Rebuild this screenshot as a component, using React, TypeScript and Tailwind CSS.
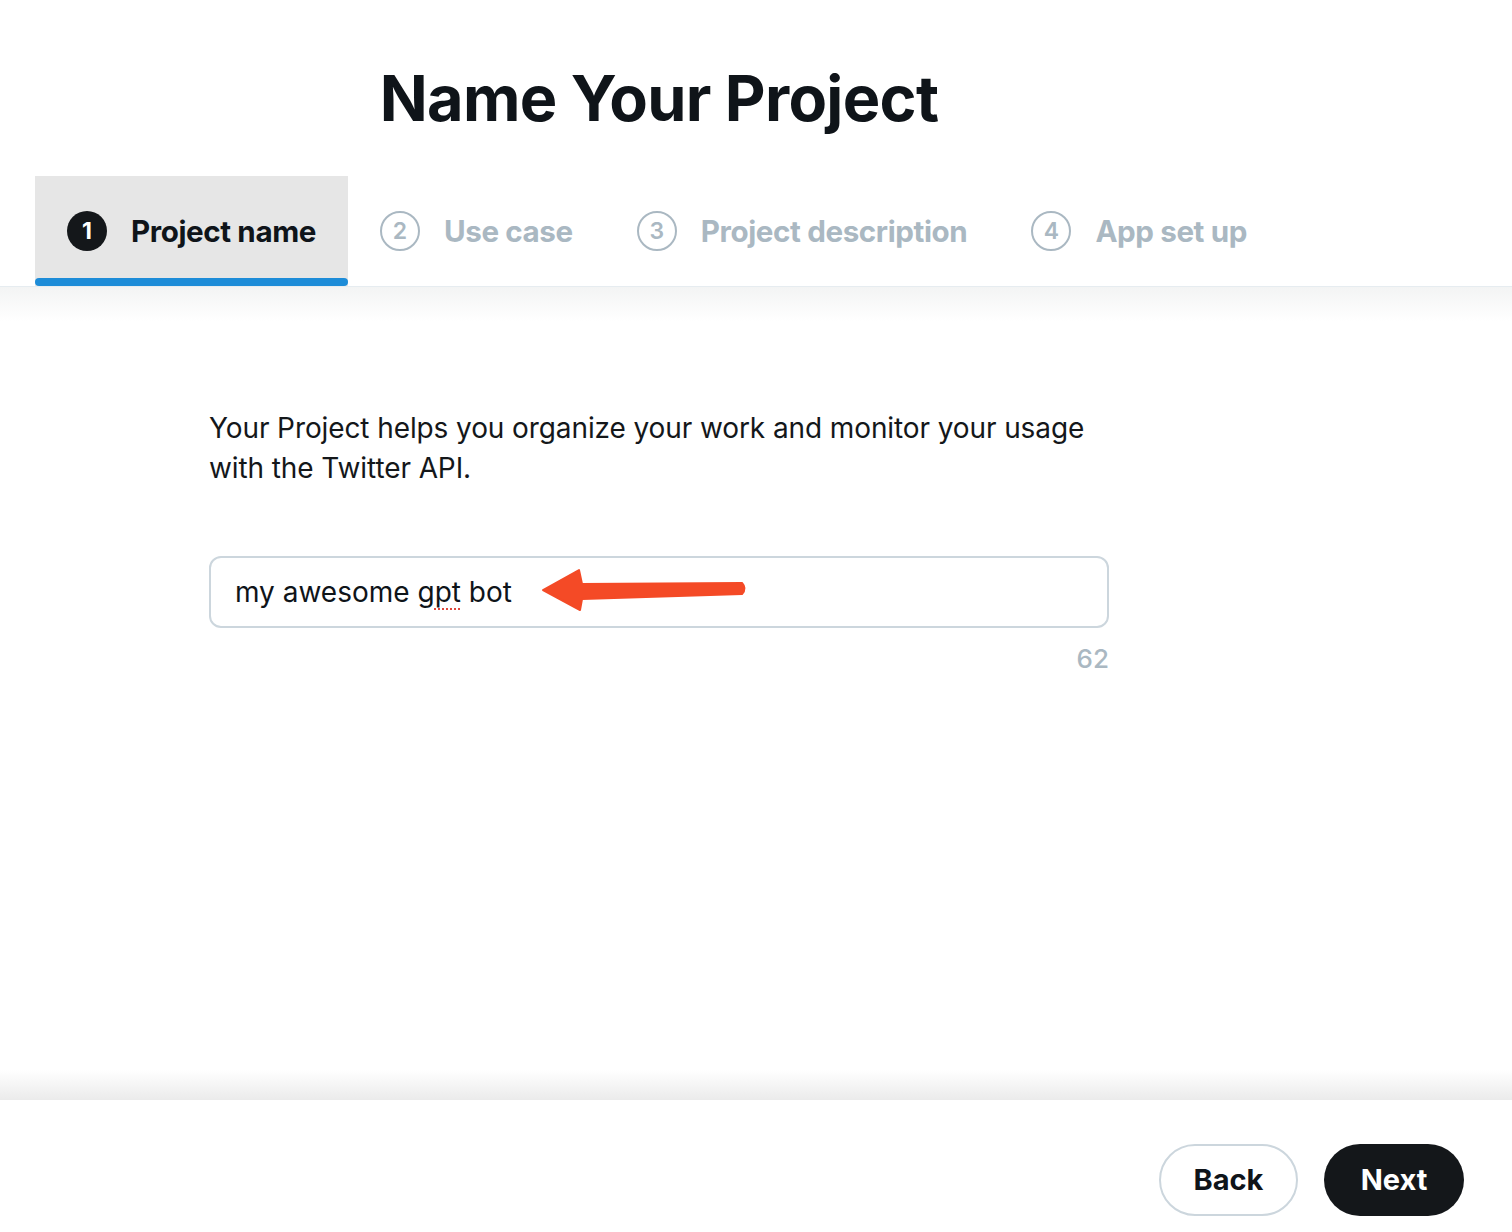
import React from 'react';

interface Step {
  num: number;
  label: string;
  active?: boolean;
}

const steps: Step[] = [
  { num: 1, label: 'Project name', active: true },
  { num: 2, label: 'Use case' },
  { num: 3, label: 'Project description' },
  { num: 4, label: 'App set up' },
];

const font = { fontFamily: 'Inter, "Liberation Sans", sans-serif' };

const StepTab: React.FC<{ step: Step }> = ({ step }) => (
  <div className={`flex flex-col ${step.active ? 'bg-[#e6e6e6]' : ''}`}>
    <div className="flex h-[102px] items-center gap-6 px-8 pt-2">
      {step.active ? (
        <span className="flex h-10 w-10 items-center justify-center rounded-full bg-[#14171a] text-[23px] font-bold text-white">
          {step.num}
        </span>
      ) : (
        <span className="flex h-10 w-10 items-center justify-center rounded-full border-2 border-[#aab8c2] text-[23px] font-semibold text-[#aab8c2]">
          {step.num}
        </span>
      )}
      <span
        className={`text-[29.6px] font-bold tracking-[-0.4px] ${
          step.active ? 'text-[#0f1419]' : 'text-[#aab8c2]'
        }`}
      >
        {step.label}
      </span>
    </div>
    <div className={`h-2 rounded-full ${step.active ? 'bg-[#1d8cd8]' : 'bg-transparent'}`} />
  </div>
);

export default function App() {
  return (
    <div className="flex h-[1232px] w-full flex-col bg-white text-[#0f1419]" style={font}>
      {/* header */}
      <div className="w-[900px] ml-[209px] pt-[66px] pb-[46px] text-center">
        <h1 className="text-[63px] font-bold leading-[64px] tracking-[-0.7px]">Name Your Project</h1>
      </div>

      {/* stepper */}
      <div className="flex border-b border-[#e6ecf0] pl-[35px]">
        {steps.map((s) => (
          <StepTab key={s.num} step={s} />
        ))}
      </div>
      <div className="h-[34px] bg-gradient-to-b from-[#f3f4f4] to-white" />

      {/* body */}
      <div className="flex-1">
        <div className="ml-[209px] mt-[87px] w-[900px]">
          <p className="text-[28px] leading-[40px] tracking-[-0.1px] text-[#14171a]">
            Your Project helps you organize your work and monitor your usage
            <br />
            with the Twitter API.
          </p>

          <div className="relative mt-[68px] flex h-[72px] items-center rounded-xl border-2 border-[#ccd6dd] px-6 text-[28px] text-[#0f1419]">
            <span>
              my awesome g
              <span className="underline decoration-dotted decoration-[#e0463a] decoration-2 underline-offset-[6px]">pt</span>{' '}
              bot
            </span>
            <svg
              className="absolute left-0 top-0"
              width="560"
              height="70"
              viewBox="0 0 560 70"
              fill="none"
            >
              <path
                d="M332 32 L368 12 L371 26 L531 25 Q536 30.5 531 36 L371 41 L369 52 Z"
                fill="#f44a26"
                stroke="#f44a26"
                strokeWidth="2"
                strokeLinejoin="round"
              />
            </svg>
          </div>
          <div className="mt-4 text-right text-[26px] font-medium leading-[30px] text-[#aab8c2]">62</div>
        </div>
      </div>

      {/* footer */}
      <div className="h-[30px] bg-gradient-to-b from-white to-[#ebebeb]" />
      <div className="flex h-[132px] justify-end gap-[26px] pr-12 pt-[44px]">
        <button className="h-[72px] w-[139px] rounded-full border-2 border-[#ccd6dd] bg-white text-[29px] font-bold text-[#0f1419]">
          Back
        </button>
        <button className="h-[72px] w-[140px] rounded-full bg-[#14171a] text-[29px] font-bold text-white">
          Next
        </button>
      </div>
    </div>
  );
}
